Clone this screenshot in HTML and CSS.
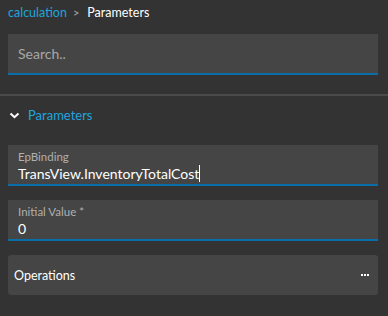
FILE: index.html
```html
<!DOCTYPE html>
<html lang="en">
<head>
<meta charset="UTF-8">
<title>Parameters</title>
<link rel="stylesheet" href="styles.css">
</head>
<body>
<div class="panel">
    <div class="crumbs">
        <a class="crumb-link">calculation</a>
        <span class="crumb-sep">&gt;</span>
        <span class="crumb-current">Parameters</span>
    </div>
    <div class="search-wrap">
        <div class="field search">
            <span class="placeholder">Search..</span>
        </div>
    </div>
    <div class="section">
        <div class="section-head">
            <svg class="chevron" width="11" height="7" viewBox="0 0 11 7">
                <path d="M1.5 1.5 L5.5 5.2 L9.5 1.5" fill="none" stroke="#fff" stroke-width="2"/>
            </svg>
            <span class="section-title">Parameters</span>
        </div>
        <div class="field labelled">
            <div class="field-label">EpBinding</div>
            <div class="field-value">TransView.InventoryTotalCost<span class="caret"></span></div>
        </div>
        <div class="field labelled">
            <div class="field-label">Initial Value *</div>
            <div class="field-value">0</div>
        </div>
        <div class="ops">
            <span class="ops-title">Operations</span>
            <span class="dots"><i></i><i></i><i></i></span>
        </div>
    </div>
</div>
</body>
</html>
```

FILE: styles.css
```css
body {
    margin: 0;
    background-color: #333333;
    font-family: Lato, "Open Sans", sans-serif;
    color: #fff;
}
.panel {
    width: 388px;
    height: 316px;
}
.crumbs {
    height: 24px;
    padding: 0 8px;
    font-size: 12.5px;
    display: flex;
    align-items: center;
}
.crumb-link {
    color: #1ea5dd;
}
.crumb-sep {
    color: #aaa;
    margin: 0 8px 0 6px;
    font-size: 11px;
}
.crumb-current {
    color: #fff;
}
.search-wrap {
    padding: 10px 10px 19px 8px;
    border-bottom: 2px solid #4a4a4a;
}
.field {
    background-color: #454545;
    border-bottom: 2px solid #0a6fa8;
    box-sizing: border-box;
}
.search {
    height: 41px;
    display: flex;
    align-items: center;
    padding-left: 10px;
}
.placeholder {
    color: #a8a8a8;
    font-size: 14px;
}
.section {
    padding: 0 10px 0 8px;
}
.section-head {
    height: 38px;
    margin-bottom: 11px;
    display: flex;
    align-items: center;
    padding-left: 1px;
}
.chevron {
    margin-right: 8px;
}
.section-title {
    color: #1ea5dd;
    font-size: 13px;
}
.labelled {
    height: 41px;
    padding: 4px 10px 0;
    margin-bottom: 14px;
}
.field-label {
    color: #b0b0b0;
    font-size: 11.5px;
    line-height: 15px;
}
.field-value {
    color: #fff;
    font-size: 14px;
    line-height: 19px;
}
.caret {
    display: inline-block;
    width: 1px;
    height: 17px;
    background-color: #fff;
    vertical-align: -3px;
}
.ops {
    height: 40px;
    background-color: #454545;
    border-radius: 3px;
    display: flex;
    align-items: center;
    justify-content: space-between;
    padding: 0 9px 0 6px;
}
.ops-title {
    font-size: 12.5px;
}
.dots {
    display: flex;
    gap: 1px;
}
.dots i {
    width: 2px;
    height: 2px;
    background-color: #fff;
}
```
